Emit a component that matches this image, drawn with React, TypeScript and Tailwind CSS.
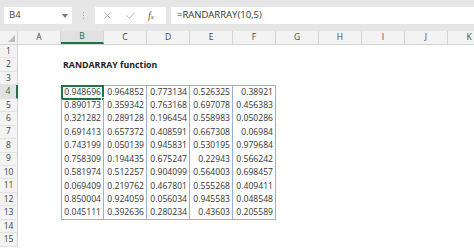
const cols = ['A', 'B', 'C', 'D', 'E', 'F', 'G', 'H', 'I', 'J', 'K'];

const data: string[][] = [
  ['0.948696', '0.964852', '0.773134', '0.526325', '0.38921'],
  ['0.890173', '0.359342', '0.763168', '0.697078', '0.456383'],
  ['0.321282', '0.289128', '0.196454', '0.558983', '0.050286'],
  ['0.691413', '0.657372', '0.408591', '0.667308', '0.06984'],
  ['0.743199', '0.050139', '0.945831', '0.530195', '0.979684'],
  ['0.758309', '0.194435', '0.675247', '0.22943', '0.566242'],
  ['0.581974', '0.512257', '0.904099', '0.564003', '0.698457'],
  ['0.069409', '0.219762', '0.467801', '0.555268', '0.409411'],
  ['0.850004', '0.924059', '0.056034', '0.945583', '0.048548'],
  ['0.045111', '0.392636', '0.280234', '0.43603', '0.205589'],
];

function Cell({ row, col }: { row: number; col: number }) {
  const inTable = row >= 4 && row <= 13 && col >= 1 && col <= 5;
  const selected = row === 4 && col === 1;
  let cls = 'relative w-[43px] h-full shrink-0 flex items-center';
  if (inTable) {
    cls += ' justify-end pr-[2px] border-r border-[#95b0da]';
    if (col === 1) cls += ' border-l';
    if (row === 4) cls += ' border-t';
    if (row === 13) cls += ' border-b';
  }
  return (
    <div className={cls}>
      {inTable && <span>{data[row - 4][col - 1]}</span>}
      {row === 2 && col === 1 && (
        <span className="pl-[2px] font-bold whitespace-nowrap text-[#222] text-[8.8px]">RANDARRAY function</span>
      )}
      {selected && (
        <div className="absolute -left-[1px] -top-[1px] -right-[1px] -bottom-[1px] border-2 border-[#217346]">
          <div className="absolute -right-[3px] -bottom-[3px] w-[4px] h-[4px] bg-[#217346] border border-white" />
        </div>
      )}
    </div>
  );
}

export default function App() {
  const rows = Array.from({ length: 15 }, (_, i) => i + 1);
  return (
    <div className="w-[474px] h-[248px] overflow-hidden bg-white text-[#333]" style={{ fontFamily: '"Open Sans", "Liberation Sans", sans-serif' }}>
      <div className="h-[31px] bg-[#e6e6e6] flex items-start pt-[7px]">
        <div className="ml-[4px] w-[68px] h-[17px] bg-white flex items-center justify-between pl-[5px] pr-[4px] text-[9.5px] text-[#444]">
          <span>B4</span>
          <svg width="6" height="4" viewBox="0 0 6 4"><path d="M0 0 L6 0 L3 4 Z" fill="#777" /></svg>
        </div>
        <div className="w-[23px] h-[17px] flex flex-col items-center justify-center gap-[2px]">
          <div className="w-[1px] h-[1px] bg-[#aaa]" />
          <div className="w-[1px] h-[1px] bg-[#aaa]" />
          <div className="w-[1px] h-[1px] bg-[#aaa]" />
        </div>
        <div className="w-[71px] h-[17px] bg-white flex items-center">
          <svg className="ml-[9px]" width="7" height="7" viewBox="0 0 7 7"><path d="M0.5 0.5 L6.5 6.5 M6.5 0.5 L0.5 6.5" stroke="#b5b5b5" strokeWidth="1" /></svg>
          <svg className="ml-[15px]" width="9" height="7" viewBox="0 0 9 7"><path d="M0.5 3.5 L3.5 6.5 L8.5 0.5" stroke="#b5b5b5" strokeWidth="1" fill="none" /></svg>
          <span className="ml-[13px] italic text-[10px] text-[#555]" style={{ fontFamily: '"Liberation Serif", serif' }}>f<span className="text-[7px]">x</span></span>
        </div>
        <div className="ml-[5px] flex-1 h-[17px] bg-white flex items-center pl-[6px] text-[9.5px] text-[#333]">
          =RANDARRAY(10,5)
        </div>
      </div>
      <div className="flex h-[14px] bg-[#f3f3f3] text-[8.5px] text-[#444] border-b border-[#d4d4d4]">
        <div className="w-[18px] shrink-0 h-full flex items-end justify-end pr-[2px] pb-[2px] border-r border-[#d4d4d4]">
          <svg width="7" height="7" viewBox="0 0 7 7"><path d="M7 0 L7 7 L0 7 Z" fill="#bdbdbd" /></svg>
        </div>
        {cols.map((c) => (
          <div
            key={c}
            className={
              'w-[43px] shrink-0 h-full flex items-center justify-center border-r border-[#d4d4d4]' +
              (c === 'B' ? ' bg-[#e1e1e1] border-b-2 border-b-[#217346] text-[#217346]' : '')
            }
          >
            {c}
          </div>
        ))}
      </div>
      {rows.map((r) => (
        <div key={r} className="flex h-[13.44px] text-[8.6px] text-[#333]">
          <div
            className={
              'w-[18px] shrink-0 h-full flex items-center justify-center text-[8.5px] border-b border-[#e2e2e2] ' +
              (r === 4 ? 'bg-[#e1e1e1] text-[#217346] border-r-2 border-r-[#217346]' : 'bg-[#f3f3f3] text-[#444] border-r border-r-[#d4d4d4]')
            }
          >
            {r}
          </div>
          {cols.map((c, i) => (
            <Cell key={c} row={r} col={i} />
          ))}
        </div>
      ))}
    </div>
  );
}
